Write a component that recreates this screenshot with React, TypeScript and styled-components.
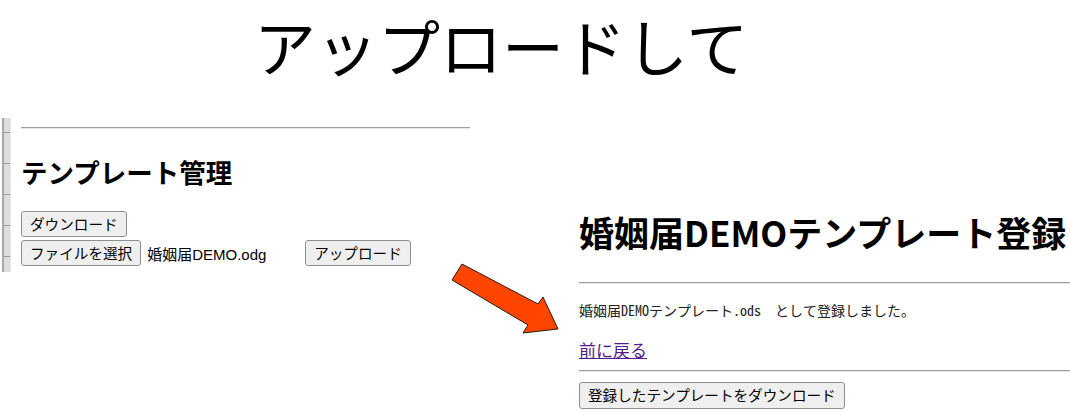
import React from "react";
import styled, { createGlobalStyle } from "styled-components";

const Global = createGlobalStyle`
  html, body { margin: 0; padding: 0; background: #ffffff; }
  body { font-family: "Noto Sans CJK JP", "Noto Sans", sans-serif; color: #000; }
`;

const Page = styled.div`
  width: 1070px;
  height: 420px;
  overflow: hidden;
  background: #fff;
`;

const Title = styled.h1`
  margin: 0;
  padding: 14px 0 42px 254px;
  font-family: "Noto Sans CJK JP", sans-serif;
  font-weight: 400;
  font-size: 62px;
  line-height: 62px;
  letter-spacing: 0;
  white-space: nowrap;
`;

const Stage = styled.div`
  position: relative;
  display: grid;
  grid-template-columns: 470px 1fr;
  align-items: start;
`;

const Shot = styled.section`
  display: flex;
  height: 154px;
`;

const Strip = styled.div`
  width: 6px;
  margin-left: 2px;
  border-left: 2px solid #a8a8a8;
  border-right: 1px solid #e8e8e8;
  background: repeating-linear-gradient(
    to bottom,
    #dedede 0px,
    #dedede 14px,
    #9a9a9a 14px,
    #9a9a9a 15px,
    #dedede 15px,
    #dedede 31px
  );
`;

const ShotBody = styled.div`
  flex: 1;
  padding-left: 10px;
  font-family: "Liberation Sans", "Noto Sans CJK JP", sans-serif;
`;

const Rule = styled.hr<{ $top: number; $bottom: number }>`
  margin: ${(p) => p.$top}px 0 ${(p) => p.$bottom}px;
  height: 0;
  border: 0;
  border-top: 1px solid #a0a0a0;
  border-bottom: 1px solid #e6e6e6;
`;

const SmallHeading = styled.h2`
  margin: 0 0 24px;
  font-family: "Noto Sans CJK JP", sans-serif;
  font-weight: 700;
  font-size: 26.5px;
  line-height: 30px;
  white-space: nowrap;
`;

const ButtonRow = styled.div`
  display: flex;
  align-items: center;
  margin-bottom: 3px;
`;

const Button = styled.button<{ $h?: number }>`
  box-sizing: border-box;
  height: ${(p) => p.$h ?? 26}px;
  padding: 0 8px;
  margin: 0;
  background: #efefef;
  border: 1px solid #8f8f8f;
  border-radius: 3px;
  font-family: "Noto Sans CJK JP", sans-serif;
  font-size: 14.6px;
  line-height: 1;
  color: #000;
  white-space: nowrap;
`;

const FileName = styled.span`
  width: 158px;
  padding-left: 6px;
  font-family: "Liberation Sans", "Noto Sans CJK JP", sans-serif;
  font-size: 15px;
  white-space: nowrap;
`;

const Result = styled.section`
  padding-left: 109px;
`;

const BigHeading = styled.h2`
  margin: 92px 0 0;
  font-family: "Noto Sans CJK JP", sans-serif;
  font-weight: 700;
  font-size: 35px;
  line-height: 44px;
  white-space: nowrap;
`;

const Message = styled.p`
  margin: 0 0 18px;
  font-family: "Noto Sans Mono CJK JP", "DejaVu Sans Mono", "Noto Sans CJK JP", monospace;
  font-size: 14px;
  line-height: 20px;
  color: #222;
  white-space: pre;
`;

const BackLink = styled.a`
  display: inline-block;
  font-family: "Noto Sans CJK JP", sans-serif;
  font-size: 17px;
  line-height: 22px;
  color: #551a8b;
  text-decoration: underline;
`;

const Arrow = styled.svg`
  position: absolute;
  left: 440px;
  top: 132px;
  overflow: visible;
`;

export default function App() {
  return (
    <Page>
      <Global />
      <Title>アップロードして</Title>
      <Stage>
        <Shot>
          <Strip />
          <ShotBody>
            <Rule $top={9} $bottom={28} />
            <SmallHeading>テンプレート管理</SmallHeading>
            <ButtonRow>
              <Button>ダウンロード</Button>
            </ButtonRow>
            <ButtonRow>
              <Button>ファイルを選択</Button>
              <FileName>婚姻届DEMO.odg</FileName>
              <Button>アップロード</Button>
            </ButtonRow>
          </ShotBody>
        </Shot>
        <Result>
          <BigHeading>婚姻届DEMOテンプレート登録</BigHeading>
          <Rule $top={28} $bottom={16} />
          <Message>{"婚姻届DEMOテンプレート.ods  として登録しました。"}</Message>
          <BackLink href="#">前に戻る</BackLink>
          <Rule $top={8} $bottom={10} />
          <Button $h={27}>登録したテンプレートをダウンロード</Button>
        </Result>
        <Arrow width="120" height="100" viewBox="0 0 120 100">
          <polygon
            points="22,14 98,54 103,47 118,79 83,83 88,75 12,30"
            fill="#ff4500"
            stroke="#2a1a10"
            strokeWidth="1"
            strokeLinejoin="miter"
          />
        </Arrow>
      </Stage>
    </Page>
  );
}
